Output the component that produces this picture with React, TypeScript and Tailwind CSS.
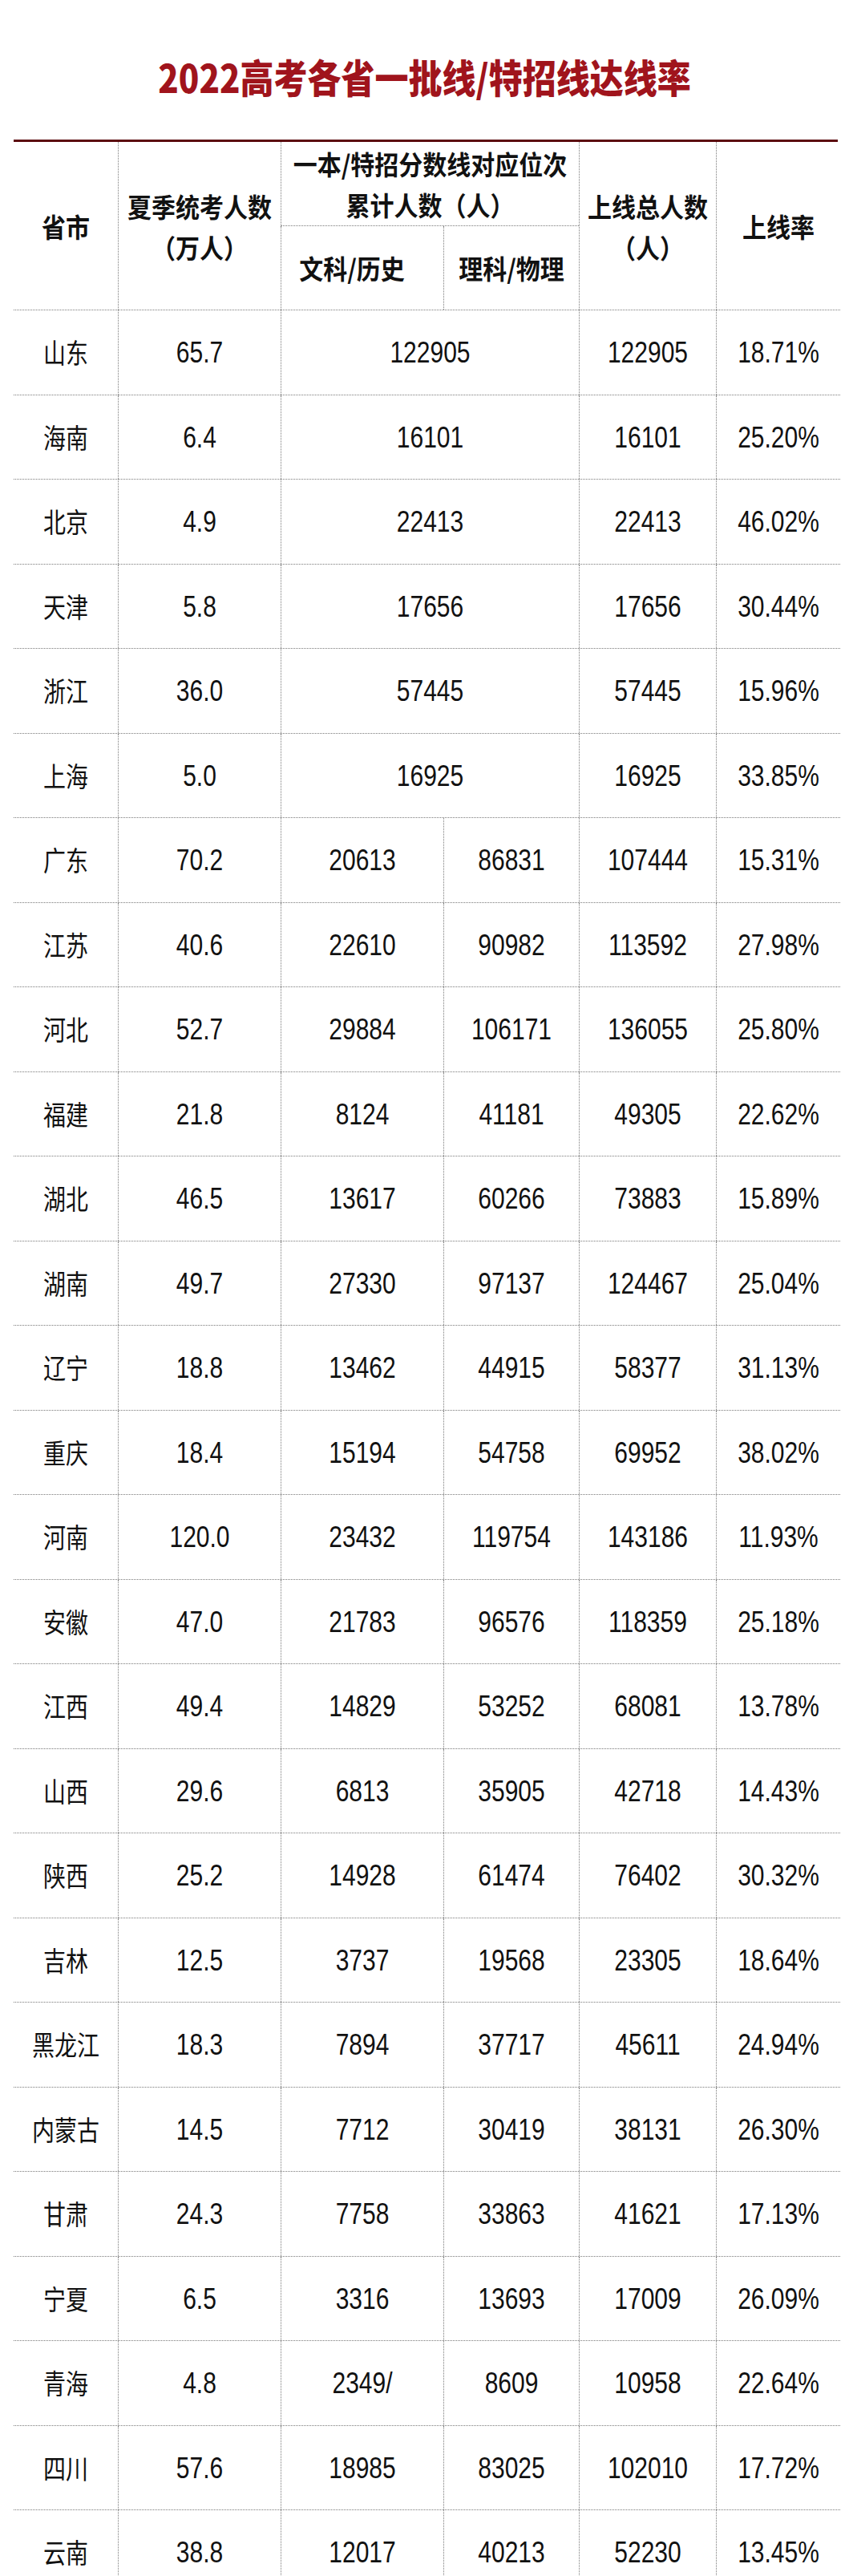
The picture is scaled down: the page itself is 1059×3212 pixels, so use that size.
import React from 'react';

/* ── Data ─────────────────────────────────────────────────── */
interface Row {
  name: string;
  total: string;
  wen: string;
  li?: string;
  pass: string;
  rate: string;
}

const rows: Row[] = [
  { name: '山东', total: '65.7', wen: '122905', pass: '122905', rate: '18.71%' },
  { name: '海南', total: '6.4', wen: '16101', pass: '16101', rate: '25.20%' },
  { name: '北京', total: '4.9', wen: '22413', pass: '22413', rate: '46.02%' },
  { name: '天津', total: '5.8', wen: '17656', pass: '17656', rate: '30.44%' },
  { name: '浙江', total: '36.0', wen: '57445', pass: '57445', rate: '15.96%' },
  { name: '上海', total: '5.0', wen: '16925', pass: '16925', rate: '33.85%' },
  { name: '广东', total: '70.2', wen: '20613', li: '86831', pass: '107444', rate: '15.31%' },
  { name: '江苏', total: '40.6', wen: '22610', li: '90982', pass: '113592', rate: '27.98%' },
  { name: '河北', total: '52.7', wen: '29884', li: '106171', pass: '136055', rate: '25.80%' },
  { name: '福建', total: '21.8', wen: '8124', li: '41181', pass: '49305', rate: '22.62%' },
  { name: '湖北', total: '46.5', wen: '13617', li: '60266', pass: '73883', rate: '15.89%' },
  { name: '湖南', total: '49.7', wen: '27330', li: '97137', pass: '124467', rate: '25.04%' },
  { name: '辽宁', total: '18.8', wen: '13462', li: '44915', pass: '58377', rate: '31.13%' },
  { name: '重庆', total: '18.4', wen: '15194', li: '54758', pass: '69952', rate: '38.02%' },
  { name: '河南', total: '120.0', wen: '23432', li: '119754', pass: '143186', rate: '11.93%' },
  { name: '安徽', total: '47.0', wen: '21783', li: '96576', pass: '118359', rate: '25.18%' },
  { name: '江西', total: '49.4', wen: '14829', li: '53252', pass: '68081', rate: '13.78%' },
  { name: '山西', total: '29.6', wen: '6813', li: '35905', pass: '42718', rate: '14.43%' },
  { name: '陕西', total: '25.2', wen: '14928', li: '61474', pass: '76402', rate: '30.32%' },
  { name: '吉林', total: '12.5', wen: '3737', li: '19568', pass: '23305', rate: '18.64%' },
  { name: '黑龙江', total: '18.3', wen: '7894', li: '37717', pass: '45611', rate: '24.94%' },
  { name: '内蒙古', total: '14.5', wen: '7712', li: '30419', pass: '38131', rate: '26.30%' },
  { name: '甘肃', total: '24.3', wen: '7758', li: '33863', pass: '41621', rate: '17.13%' },
  { name: '宁夏', total: '6.5', wen: '3316', li: '13693', pass: '17009', rate: '26.09%' },
  { name: '青海', total: '4.8', wen: '2349/', li: '8609', pass: '10958', rate: '22.64%' },
  { name: '四川', total: '57.6', wen: '18985', li: '83025', pass: '102010', rate: '17.72%' },
  { name: '云南', total: '38.8', wen: '12017', li: '40213', pass: '52230', rate: '13.45%' },
];

const cols = 'grid grid-cols-[130px_203px_203px_169px_171px_155px]';
const line = 'border-dotted border-[#7a7a7a]';

/* ── Cells ────────────────────────────────────────────────── */
function Num({ children }: { children: React.ReactNode }) {
  return (
    <span className="inline-block scale-y-[1.25] text-[30px] leading-none font-['Liberation_Sans',Arial,sans-serif]">
      {children}
    </span>
  );
}

function Cell({ children, className = '' }: { children: React.ReactNode; className?: string }) {
  return (
    <div className={`flex items-center justify-center border-l ${line} ${className}`}>
      {children}
    </div>
  );
}

function HeadText({ children }: { children: React.ReactNode }) {
  return (
    <div className="scale-y-[1.1] text-center text-[30px] leading-[46px] font-bold">
      {children}
    </div>
  );
}

/* ── Page ─────────────────────────────────────────────────── */
export default function App() {
  return (
    <div className="h-[3212px] w-[1059px] overflow-hidden bg-white text-[#111] font-['Noto_Sans_CJK_SC',sans-serif]">
      {/* Title */}
      <div className="flex h-[174px] items-start justify-center pt-[70px]">
        <h1 className="scale-y-[1.15] text-[42px] leading-[50px] font-black text-[#a0141c]">
          2022高考各省一批线/特招线达线率
        </h1>
      </div>

      <div className="ml-[17px] mr-[14px] h-[3px] bg-[#5c0c10]" />

      <div className="ml-[17px] w-[1031px]">
        {/* Header */}
        <div className={`${cols} grid-rows-[105px_104px]`}>
          <div className="row-span-2 flex items-center justify-center">
            <HeadText>省市</HeadText>
          </div>
          <Cell className="row-span-2">
            <HeadText>
              夏季统考人数
              <br />
              （万人）
            </HeadText>
          </Cell>
          <Cell className="col-span-2 border-b">
            <HeadText>
              一本/特招分数线对应位次
              <br />
              累计人数（人）
            </HeadText>
          </Cell>
          <Cell className="row-span-2">
            <HeadText>
              上线总人数
              <br />
              （人）
            </HeadText>
          </Cell>
          <Cell className="row-span-2">
            <HeadText>上线率</HeadText>
          </Cell>
          <Cell className="pr-[26px]">
            <HeadText>文科/历史</HeadText>
          </Cell>
          <Cell>
            <HeadText>理科/物理</HeadText>
          </Cell>
        </div>

        {/* Body */}
        {rows.map((r) => (
          <div key={r.name} className={`${cols} h-[105.5px] border-t ${line}`}>
            <div className="flex items-center justify-center">
              <span className="inline-block scale-y-[1.2] text-[28px] leading-none">{r.name}</span>
            </div>
            <Cell>
              <Num>{r.total}</Num>
            </Cell>
            {r.li ? (
              <>
                <Cell>
                  <Num>{r.wen}</Num>
                </Cell>
                <Cell>
                  <Num>{r.li}</Num>
                </Cell>
              </>
            ) : (
              <Cell className="col-span-2">
                <Num>{r.wen}</Num>
              </Cell>
            )}
            <Cell>
              <Num>{r.pass}</Num>
            </Cell>
            <Cell>
              <Num>{r.rate}</Num>
            </Cell>
          </div>
        ))}
      </div>
    </div>
  );
}
